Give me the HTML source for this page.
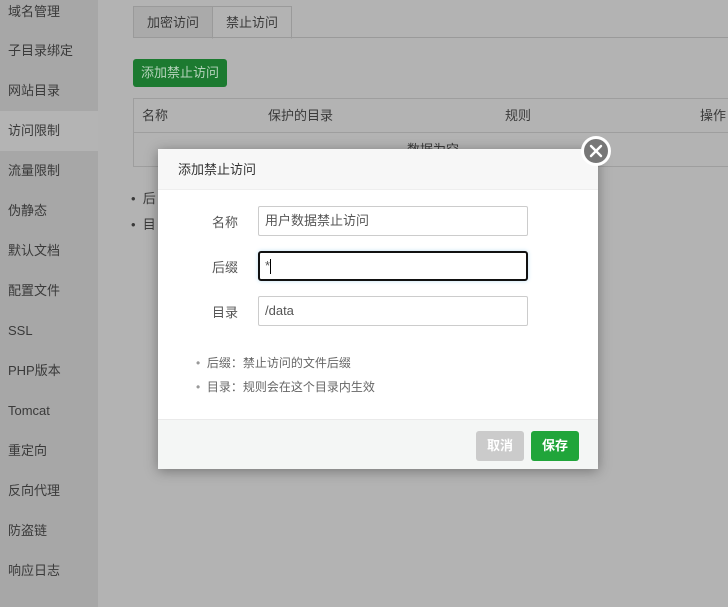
<!DOCTYPE html>
<html><head><meta charset="utf-8"><style>
*{box-sizing:border-box;margin:0;padding:0}
body{width:728px;height:607px;overflow:hidden;position:relative;background:#b3b3b3;font-family:"Liberation Sans","Noto Sans CJK SC",sans-serif;font-size:13px;color:#333}
.side{position:absolute;left:0;top:0;width:98px;height:607px;background:#a7a7a7}
.side div{height:40px;line-height:40px;padding-left:8px;color:#3a3a3a;font-size:13px}
.side .act{background:#b4b4b4}
.tabs{position:absolute;left:133px;top:6px;width:595px;height:32px;border-bottom:1px solid #9a9a9a}
.tab{position:absolute;top:0;height:32px;line-height:31px;text-align:center;border:1px solid #9a9a9a;color:#3a3a3a}
.btn1{position:absolute;left:133px;top:59px;width:94px;height:28px;background:#1c7a30;color:#b5d3bb;border-radius:3px;text-align:center;line-height:28px;font-size:13px}
.tbl{position:absolute;left:133px;top:98px;width:600px;height:69px;border:1px solid #9e9e9e}
.tbl .h{height:34px;line-height:34px;border-bottom:1px solid #9e9e9e;position:relative;color:#3a3a3a}
.tbl .h span{position:absolute}
.notes{position:absolute;left:131px;top:186px;color:#3a3a3a;line-height:26px}
.modal{position:absolute;left:158px;top:149px;width:440px;height:320px;background:#fff;box-shadow:0 2px 12px rgba(0,0,0,.35)}
.mh{height:41px;background:#f7f7f7;border-bottom:1px solid #eee;line-height:41px;padding-left:20px;font-size:13px;color:#333}
.lbl{position:absolute;right:360px;width:60px;text-align:right;color:#555;font-size:13px}
.inp{position:absolute;left:100px;width:270px;height:30px;border:1px solid #ccc;border-radius:2px;padding-left:6px;line-height:28px;color:#555;font-size:13px}
.mf{position:absolute;left:0;bottom:0;width:440px;height:50px;background:#f4f6f5;border-top:1px solid #eaeaea}
.b{position:absolute;top:11px;height:30px;width:48px;border-radius:3px;color:#fff;text-align:center;line-height:30px;font-weight:bold;font-size:13px}
.close{position:absolute;left:581px;top:136px;width:30px;height:30px;border-radius:50%;background:#777;border:3px solid #fff}
</style></head><body>
<div class="side">
<div style="height:31px;line-height:24px">域名管理</div>
<div>子目录绑定</div><div>网站目录</div><div class="act">访问限制</div><div>流量限制</div><div>伪静态</div><div>默认文档</div><div>配置文件</div><div>SSL</div><div>PHP版本</div><div>Tomcat</div><div>重定向</div><div>反向代理</div><div>防盗链</div><div>响应日志</div>
</div>
<div class="tabs">
<div class="tab" style="left:0;width:80px;background:#aaa">加密访问</div>
<div class="tab" style="left:79px;width:80px;border-bottom:1px solid #b3b3b3;height:33px">禁止访问</div>
</div>
<div class="btn1">添加禁止访问</div>
<div class="tbl"><div class="h"><span style="left:8px">名称</span><span style="left:134px">保护的目录</span><span style="left:371px">规则</span><span style="left:566px">操作</span></div>
<div style="text-align:center;line-height:34px;color:#3a3a3a;padding-left:0">数据为空</div></div>
<div class="notes"><div>• &nbsp;后</div><div>• &nbsp;目</div></div>
<div class="modal">
<div class="mh">添加禁止访问</div>
<div class="lbl" style="top:63px">名称</div><div class="inp" style="top:57px">用户数据禁止访问</div>
<div class="lbl" style="top:108px">后缀</div><div class="inp" style="top:102px;border:2px solid #111;border-radius:3px;box-shadow:0 0 4px #bfe0f5;line-height:26px;padding-left:5px">*<span style="display:inline-block;width:1px;height:15px;background:#000;vertical-align:middle"></span></div>
<div class="lbl" style="top:153px">目录</div><div class="inp" style="top:147px">/data</div>
<div style="position:absolute;left:38px;top:202px;line-height:24px;color:#666;font-size:12px"><div><span style="color:#999">•</span> &nbsp;后缀：禁止访问的文件后缀</div><div><span style="color:#999">•</span> &nbsp;目录：规则会在这个目录内生效</div></div>
<div class="mf"><div class="b" style="left:318px;background:#cbcbcb">取消</div><div class="b" style="left:373px;background:#20a53a">保存</div></div>
</div>
<div class="close"><svg width="24" height="24" viewBox="0 0 24 24"><path d="M7 7L17 17M17 7L7 17" stroke="#fff" stroke-width="2.4" stroke-linecap="round"/></svg></div>
</body></html>
